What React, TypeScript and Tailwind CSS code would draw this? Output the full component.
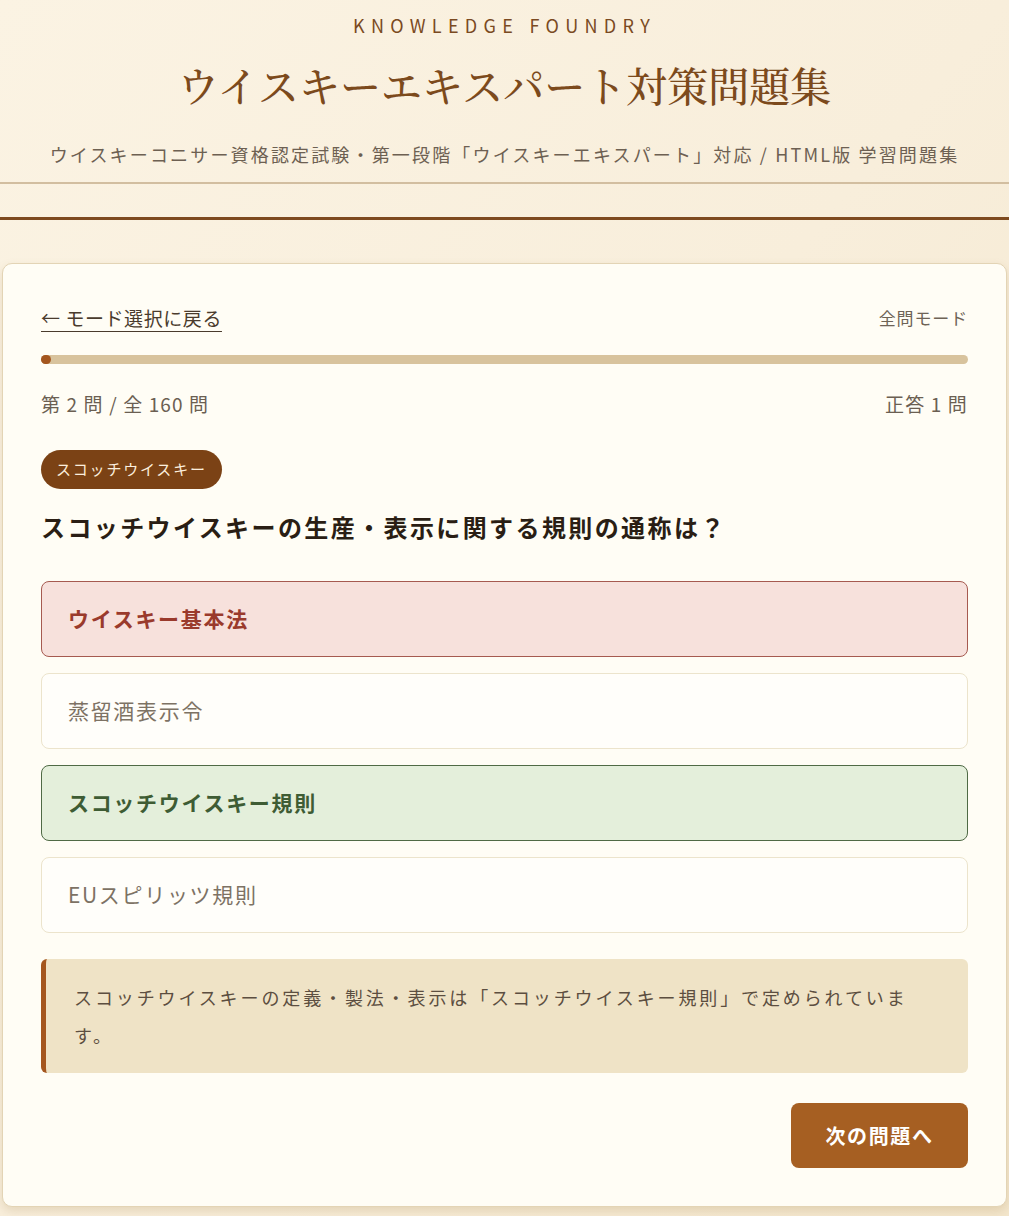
import React from 'react';

const sans = 'font-["Noto_Sans_CJK_JP","Noto_Sans",sans-serif]';

const options = [
  { label: 'ウイスキー基本法', state: 'wrong' },
  { label: '蒸留酒表示令', state: 'idle' },
  { label: 'スコッチウイスキー規則', state: 'correct' },
  { label: 'EUスピリッツ規則', state: 'idle' },
];

const optionClass: Record<string, string> = {
  wrong: 'bg-[#f7e1dc] border-[#a65a50] text-[#9a3a2c] font-bold',
  correct: 'bg-[#e4efdb] border-[#4f6a45] text-[#3e5c34] font-bold',
  idle: 'bg-[#fffefa] border-[#ece4cc] text-[#7d7264]',
};

const App = () => {
  return (
    <div className={`min-h-[1216px] bg-gradient-to-br from-[#fbf3e3] via-[#f8eedb] to-[#f3e6cc] ${sans}`}>
      <header className="text-center">
        <p className="pt-[13px] text-[18px] leading-6 tracking-[0.35em] text-[#7a4a22]">
          KNOWLEDGE FOUNDRY
        </p>
        <h1 className='mt-[22px] text-[41px] leading-[52px] font-medium text-[#7c4a1c] font-["Noto_Serif_CJK_JP","Liberation_Serif","Noto_Sans_CJK_JP",serif]'>
          ウイスキーエキスパート対策問題集
        </h1>
        <p className="mt-[31px] text-[18px] leading-6 tracking-[0.12em] text-[#6d6052]">
          ウイスキーコニサー資格認定試験・第一段階「ウイスキーエキスパート」対応 / HTML版 学習問題集
        </p>
        <div className="mt-[16px] h-[2px] bg-[#d2bea0]" />
        <div className="mt-[33px] h-[3px] bg-[#7e4a1f]" />
      </header>

      <main className="mx-[2px] mt-[43px] rounded-[10px] border border-[#e3d4b5] bg-[#fffdf5] px-[38px] pt-[40px] pb-[38px] shadow-[0_4px_10px_rgba(150,110,50,0.18)]">
        <div className="flex items-center justify-between">
          <a href="#" className="text-[19px] leading-7 tracking-[0.03em] text-[#4a3b2d] underline underline-offset-[5px]">
            ← モード選択に戻る
          </a>
          <span className="text-[17px] leading-6 tracking-[0.05em] text-[#6e6356]">全問モード</span>
        </div>

        <div className="mt-[23px] h-[9px] rounded-full bg-[#d8c39d]">
          <div className="h-full w-[10px] rounded-full bg-[#a4561e]" />
        </div>

        <div className="mt-[26px] flex items-center justify-between text-[19px] leading-7 tracking-[0.06em] text-[#6b5f52]">
          <span>第 2 問 / 全 160 問</span>
          <span>正答 1 問</span>
        </div>

        <span className="mt-[32px] inline-flex h-[39px] items-center rounded-full bg-[#7b4215] px-[15px] text-[15px] tracking-[0.12em] text-[#fbeedd]">
          スコッチウイスキー
        </span>

        <h2 className="mt-[22px] text-[24px] leading-8 font-bold tracking-[0.1em] text-[#2a1e14]">
          スコッチウイスキーの生産・表示に関する規則の通称は？
        </h2>

        <div className="mt-[38px] flex flex-col gap-[16px]">
          {options.map((o) => (
            <button
              key={o.label}
              className={`flex h-[76px] items-center rounded-[8px] border-[1.5px] px-[26px] text-left text-[21px] tracking-[0.08em] ${optionClass[o.state]}`}
            >
              {o.label}
            </button>
          ))}
        </div>

        <div className="mt-[26px] rounded-[6px] border-l-[5px] border-[#a4561e] bg-[#efe3c6] py-[19px] pl-[28px] pr-[28px] text-[18px] leading-[38px] tracking-[0.16em] text-[#5c4e40]">
          スコッチウイスキーの定義・製法・表示は「スコッチウイスキー規則」で定められています。
        </div>

        <div className="mt-[30px] flex justify-end">
          <button className="h-[65px] w-[177px] rounded-[8px] bg-[#a65f22] text-[20px] font-bold tracking-[0.08em] text-white">
            次の問題へ
          </button>
        </div>
      </main>
    </div>
  );
};

export default App;
